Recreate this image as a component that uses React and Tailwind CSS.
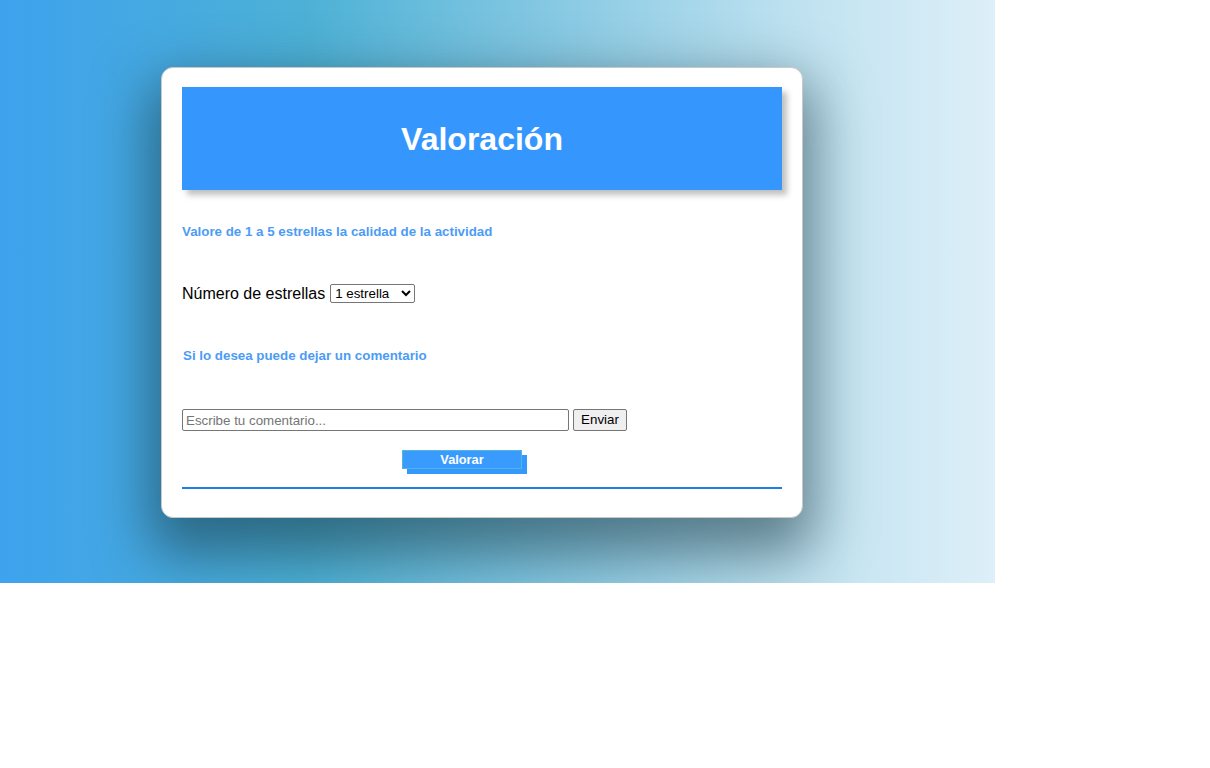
export default function App() {
  return (
    <div className="min-h-[768px] w-[1210px] bg-white font-['Liberation_Sans',Arial,sans-serif]">
      <div className="h-[583px] w-[995px] overflow-hidden bg-[linear-gradient(to_right,#3ea2ee_0%,#4db1d6_31%,#8ccbe4_58%,#bfe2f0_80%,#ddeff8_100%)] pl-[161px] pt-[67px]">
        <div className="h-[451px] w-[642px] rounded-[12px] border border-[#c8c8c8] bg-white px-[20px] pt-[19px] shadow-[0_25px_55px_12px_rgba(20,50,60,0.55)]">
          <div className="flex h-[103px] w-[600px] items-center justify-center bg-[#3597fe] shadow-[5px_5px_6px_rgba(0,0,0,0.25)]">
            <h1 className="text-[32px] font-bold text-white">Valoración</h1>
          </div>

          <p className="mt-[34px] text-[13.33px] font-bold leading-[15px] text-[#4c9cf6]">
            Valore de 1 a 5 estrellas la calidad de la actividad
          </p>

          <div className="mt-[45px] flex h-[19px] items-center text-[16px] leading-[18px] text-black">
            <span>Número de estrellas</span>
            <select className="ml-[5px] h-[19px] w-[85px] rounded-[2px] border border-[#767676] bg-white text-[13.33px] text-black">
              <option>1 estrella</option>
              <option>2 estrellas</option>
              <option>3 estrellas</option>
              <option>4 estrellas</option>
              <option>5 estrellas</option>
            </select>
          </div>

          <p className="ml-[1px] mt-[45px] text-[13.33px] font-bold leading-[15px] text-[#4c9cf6]">
            Si lo desea puede dejar un comentario
          </p>

          <div className="mt-[46px] flex h-[22px] items-center gap-[4px]">
            <input
              type="text"
              placeholder="Escribe tu comentario..."
              className="h-[22px] w-[387px] rounded-[2px] border border-[#767676] px-[3px] text-[13.33px] text-black placeholder:text-[#757575]"
            />
            <button
              type="button"
              className="h-[22px] w-[54px] rounded-[2px] border border-[#767676] bg-[#efefef] text-[13.33px] text-black"
            >
              Enviar
            </button>
          </div>

          <button
            type="button"
            className="ml-[220px] mt-[19px] block h-[19px] w-[120px] border border-[#52b6dc] bg-[#3a9bff] text-[12.8px] font-bold leading-[16px] text-white shadow-[5px_5px_0_#3498ff]"
          >
            Valorar
          </button>

          <div className="mt-[18px] h-[2px] w-[600px] bg-[#1f7fe6]" />
        </div>
      </div>
    </div>
  );
}
